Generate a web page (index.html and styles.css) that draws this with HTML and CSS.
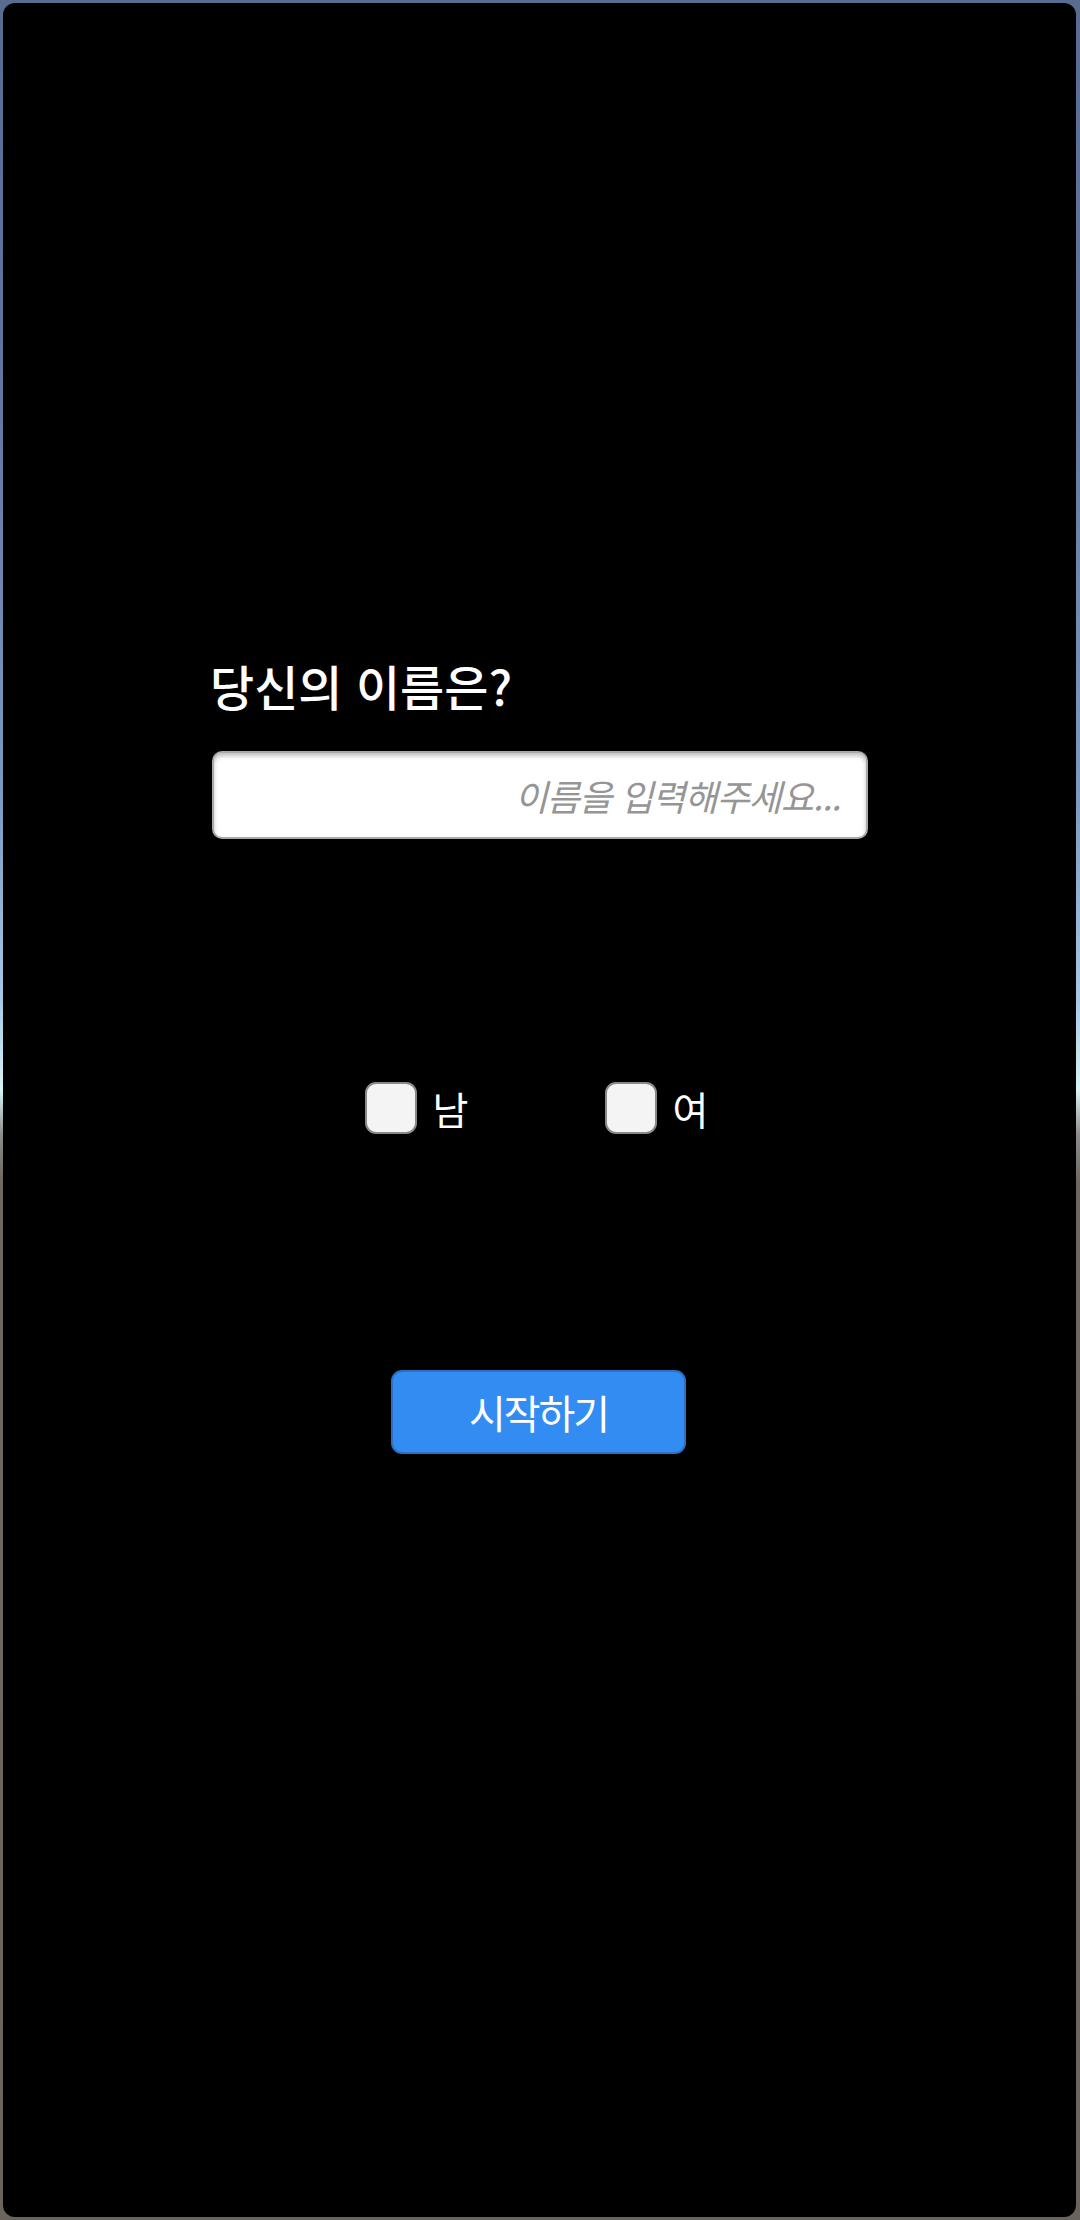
FILE: index.html
```html
<!DOCTYPE html>
<html lang="ko">
<head>
<meta charset="utf-8">
<link rel="stylesheet" href="styles.css">
</head>
<body>
<div class="screen">
  <main class="panel">
    <section class="form">
      <h1 class="title">당신의 이름은?</h1>
      <input class="name-input" type="text" placeholder="이름을 입력해주세요...">
    </section>
    <div class="genders">
      <label class="gender"><span class="box"></span><span class="glabel">남</span></label>
      <label class="gender"><span class="box"></span><span class="glabel">여</span></label>
    </div>
    <button class="start">시작하기</button>
  </main>
</div>
</body>
</html>
```
FILE: styles.css
```css
html, body {
  margin: 0;
  padding: 0;
}
body {
  width: 1080px;
  height: 2220px;
  font-family: "Noto Sans CJK KR", "Noto Sans", sans-serif;
  background: linear-gradient(to bottom,
    #586c92 0px,
    #62779e 400px,
    #7e9ac0 800px,
    #a9c8e6 1000px,
    #d8f4f6 1090px,
    #8c8c8a 1135px,
    #6f6860 1180px,
    #6a645d 2220px);
}
.screen {
  box-sizing: border-box;
  height: 2220px;
  padding: 3px 4px 3px 3px;
}
.panel {
  box-sizing: border-box;
  height: 2214px;
  background: #000;
  border-radius: 12px;
  display: flex;
  flex-direction: column;
  padding-top: 651px;
}
.form {
  margin-left: 209px;
  width: 656px;
  display: flex;
  flex-direction: column;
}
.title {
  margin: 0 0 0 -2px;
  font-size: 48px;
  line-height: 62px;
  font-weight: 500;
  color: #fff;
  letter-spacing: 0;
}
.name-input {
  box-sizing: border-box;
  margin-top: 35px;
  width: 656px;
  height: 88px;
  border: 2px solid #a9a9a9;
  border-radius: 10px;
  background: #fff;
  box-shadow: inset 0 3px 4px rgba(0,0,0,0.25);
  padding: 0 26px 0 20px;
  text-align: right;
  font-family: inherit;
  font-size: 36px;
  outline: none;
}
.name-input::placeholder {
  color: #959595;
  font-style: italic;
  letter-spacing: -1px;
}
.genders {
  margin-top: 243px;
  display: flex;
  justify-content: center;
  gap: 136px;
  padding-right: 6px;
}
.gender {
  display: flex;
  align-items: center;
  gap: 16px;
}
.box {
  box-sizing: border-box;
  width: 52px;
  height: 52px;
  background: #f4f4f4;
  border: 2px solid #8a8a8a;
  border-radius: 11px;
}
.glabel {
  color: #fff;
  font-size: 39px;
  line-height: 44px;
}
.start {
  align-self: center;
  margin-top: 236px;
  margin-left: -2px;
  width: 295px;
  height: 84px;
  background: #338cf1;
  border: 2px solid #2a70c4;
  border-radius: 11px;
  color: #fff;
  font-family: inherit;
  font-size: 40px;
  letter-spacing: -2px;
  padding: 0;
}
```
